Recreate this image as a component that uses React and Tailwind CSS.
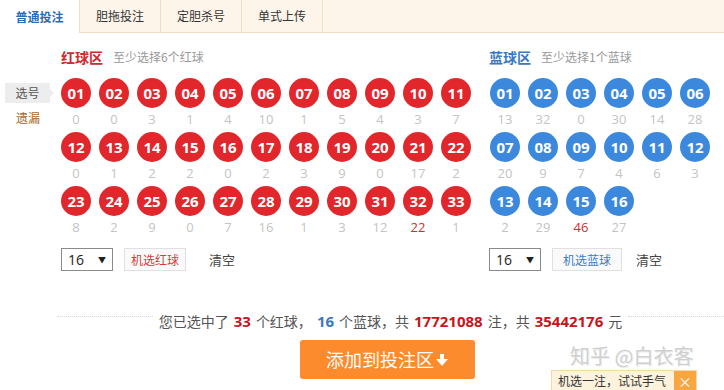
import React from "react";

const CJK = { fontFamily: '"Noto Sans CJK SC", "Noto Sans", sans-serif' };
const NUM = { fontFamily: '"Open Sans", "Liberation Sans", sans-serif' };

const redRows = [
  [["01", "0"], ["02", "0"], ["03", "3"], ["04", "1"], ["05", "4"], ["06", "10"], ["07", "1"], ["08", "5"], ["09", "4"], ["10", "3"], ["11", "7"]],
  [["12", "0"], ["13", "1"], ["14", "2"], ["15", "2"], ["16", "0"], ["17", "2"], ["18", "3"], ["19", "9"], ["20", "0"], ["21", "17"], ["22", "2"]],
  [["23", "8"], ["24", "2"], ["25", "9"], ["26", "0"], ["27", "7"], ["28", "16"], ["29", "1"], ["30", "3"], ["31", "12"], ["32", "22", true], ["33", "1"]],
];

const blueRows = [
  [["01", "13"], ["02", "32"], ["03", "0"], ["04", "30"], ["05", "14"], ["06", "28"]],
  [["07", "20"], ["08", "9"], ["09", "7"], ["10", "4"], ["11", "6"], ["12", "3"]],
  [["13", "2"], ["14", "29"], ["15", "46", true], ["16", "27"]],
];

function Ball({ n, miss, hot, blue }) {
  return (
    <div className="flex flex-col items-center w-[30px]">
      <div
        className={
          "w-[30px] h-[30px] rounded-full flex items-center justify-center text-white font-bold text-[15px] leading-none " +
          (blue ? "bg-[#3b88dc]" : "bg-[#e1262c]")
        }
        style={NUM}
      >
        {n}
      </div>
      <div
        className={"h-[24px] flex items-center text-[13px] " + (hot ? "text-[#c8342f]" : "text-[#c4c4c4]")}
        style={NUM}
      >
        {miss}
      </div>
    </div>
  );
}

function Select() {
  return (
    <div className="w-[52px] h-[23px] border border-[#8a8a8a] flex items-center justify-between pl-[6px] pr-[6px] bg-white">
      <span className="text-[14px] text-[#222]" style={NUM}>16</span>
      <span className="text-[8px] text-[#222]">▼</span>
    </div>
  );
}

function Tab({ label, active }) {
  return (
    <div
      className={
        "h-[33px] flex items-center justify-center text-[12px] " +
        (active
          ? "w-[79px] bg-white text-[#2a6bb5] font-bold"
          : "w-[81px] bg-[#fdf5e9] text-[#333] border-l border-[#f0dfc6] border-b")
      }
      style={CJK}
    >
      {label}
    </div>
  );
}

export default function App() {
  return (
    <div className="w-[724px] h-[390px] bg-white relative overflow-hidden" style={CJK}>
      {/* tabs */}
      <div className="flex h-[33px]">
        <Tab label="普通投注" active />
        <Tab label="胆拖投注" />
        <Tab label="定胆杀号" />
        <Tab label="单式上传" />
        <div className="flex-1 bg-[#fdf5e9] border-l border-b border-[#f0dfc6]" />
      </div>

      {/* main */}
      <div className="flex pt-[15px]">
        {/* left labels */}
        <div className="w-[61px] flex flex-col pt-[35px]">
          <div className="relative ml-[5px] w-[45px] h-[20px] bg-[#ededed] flex items-center justify-center text-[12px] text-[#555]">
            选号
            <div className="absolute right-[-4px] top-[6px] w-0 h-0 border-y-[4px] border-y-transparent border-l-[4px] border-l-[#ededed]" />
          </div>
          <div className="ml-[16px] mt-[6px] text-[12px] text-[#a8671f]">遗漏</div>
        </div>

        {/* red section */}
        <div className="flex flex-col w-[410px]">
          <div className="h-[18px] flex items-center gap-[10px]">
            <span className="text-[14px] font-bold text-[#cc2b2f]">红球区</span>
            <span className="text-[12px] text-[#999]">至少选择6个红球</span>
          </div>
          <div className="mt-[12px] flex flex-col">
            {redRows.map((row, i) => (
              <div key={i} className="flex gap-[8px]">
                {row.map(([n, m, hot]) => (
                  <Ball key={n} n={n} miss={m} hot={hot} />
                ))}
              </div>
            ))}
          </div>
          <div className="mt-[8px] flex items-center h-[23px]">
            <Select />
            <div className="ml-[11px] h-[23px] px-[6px] border border-[#e0e0e0] bg-[#fafafa] flex items-center text-[12px] text-[#d23c3c]">
              机选红球
            </div>
            <span className="ml-[23px] text-[13px] text-[#444]">清空</span>
          </div>
        </div>

        {/* blue section */}
        <div className="flex flex-col ml-[18px]">
          <div className="h-[18px] flex items-center gap-[10px]">
            <span className="text-[14px] font-bold text-[#3a78c2]">蓝球区</span>
            <span className="text-[12px] text-[#999]">至少选择1个蓝球</span>
          </div>
          <div className="mt-[12px] flex flex-col ml-[1px]">
            {blueRows.map((row, i) => (
              <div key={i} className="flex gap-[8px]">
                {row.map(([n, m, hot]) => (
                  <Ball key={n} n={n} miss={m} hot={hot} blue />
                ))}
              </div>
            ))}
          </div>
          <div className="mt-[8px] flex items-center h-[23px]">
            <Select />
            <div className="ml-[11px] h-[23px] px-[10px] border border-[#e0e0e0] bg-[#fafafa] flex items-center text-[12px] text-[#3c7cc8]">
              机选蓝球
            </div>
            <span className="ml-[14px] text-[13px] text-[#444]">清空</span>
          </div>
        </div>
      </div>

      {/* summary */}
      <div className="ml-[57px] mt-[40px] flex items-start h-[20px]">
        <div className="flex-1 mt-[5px] border-t border-dotted border-[#d8d8d8]" />
        <div className="px-[6px] flex items-center h-[20px] text-[14px] text-[#555] whitespace-nowrap">
          <span>您已选中了</span>
          <span className="mx-[5px] text-[15px] font-bold text-[#c4161c]" style={NUM}>33</span>
          <span>个红球，</span>
          <span className="mx-[5px] text-[15px] font-bold text-[#3a78c2]" style={NUM}>16</span>
          <span>个蓝球，共</span>
          <span className="mx-[5px] text-[15px] font-bold text-[#c4161c]" style={NUM}>17721088</span>
          <span>注，共</span>
          <span className="mx-[5px] text-[15px] font-bold text-[#c4161c]" style={NUM}>35442176</span>
          <span>元</span>
        </div>
        <div className="flex-1 mt-[5px] border-t border-dotted border-[#d8d8d8]" />
      </div>

      {/* add button */}
      <div className="ml-[50px] mt-[9px] flex justify-center">
        <div className="w-[175px] h-[39px] rounded-[3px] bg-[#fb8b2d] flex items-center justify-center gap-[2px] text-white text-[18px]">
          <span>添加到投注区</span>
          <svg width="12" height="14" viewBox="0 0 12 14">
            <rect x="4" y="1" width="4" height="6" fill="white" />
            <polygon points="0,6 12,6 6,13" fill="white" />
          </svg>
        </div>
      </div>

      {/* watermark */}
      <div
        className="absolute left-[570px] top-[346px] text-[20px] leading-[20px] text-[#cfcfcf] whitespace-nowrap"
        style={{ textShadow: "0 0 1px #fff, 1px 1px 0 #eee" }}
      >
        知乎 @白衣客
      </div>

      {/* tooltip */}
      <div className="absolute left-[551px] top-[370px] w-[146px] h-[22px] flex border border-[#f2d9ab] bg-[#fdf2dc]">
        <div className="flex-1 flex items-center pl-[6px] text-[12px] text-[#333]">机选一注，试试手气</div>
        <div className="w-[22px] bg-[#f9a540] flex items-center justify-center text-white text-[14px]">×</div>
      </div>
    </div>
  );
}
